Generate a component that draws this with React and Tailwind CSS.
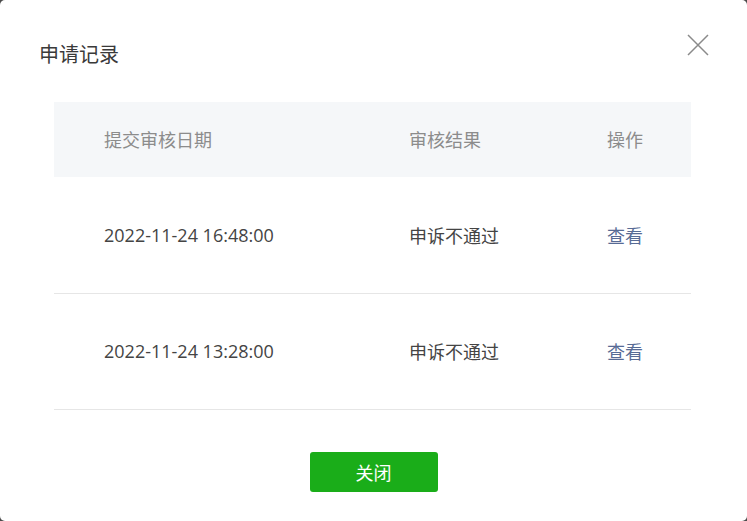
import React from "react";

const rows = [
  { date: "2022-11-24 16:48:00", result: "申诉不通过", h: "h-[117px]" },
  { date: "2022-11-24 13:28:00", result: "申诉不通过", h: "h-[116px]" },
];

export default function App() {
  return (
    <div className="h-[521px] w-[747px] bg-[#4b4b4b] font-['Noto_Sans_CJK_SC','Microsoft_YaHei',sans-serif]">
      <div className="relative flex h-full flex-col rounded-[5px] bg-white">
        {/* 标题 */}
        <h2 className="pl-[39px] pt-[40px] text-[20px] leading-[28px] text-[#3a3a3a]">申请记录</h2>
        <button className="absolute right-[38px] top-[34px] h-[22px] w-[22px] text-[#8a8a8a]">
          <svg viewBox="0 0 22 22" className="h-[22px] w-[22px]" fill="none" stroke="currentColor" strokeWidth="1.5">
            <path d="M1 1L21 21M21 1L1 21" />
          </svg>
        </button>

        {/* 表格 */}
        <div className="ml-[54px] mr-[56px] mt-[34px]">
          <div className="grid h-[75px] grid-cols-[355px_198px_1fr] items-center bg-[#f5f7f9] text-[18px] text-[#8c8c8c]">
            <div className="pl-[50px]">提交审核日期</div>
            <div>审核结果</div>
            <div>操作</div>
          </div>
          {rows.map((row, i) => (
            <div
              key={i}
              className={`grid ${row.h} grid-cols-[355px_198px_1fr] items-center border-b border-[#e6e6e6] text-[18px] text-[#444]`}
            >
              <div className="pl-[50px] font-['Open_Sans','Noto_Sans_CJK_SC',sans-serif]">{row.date}</div>
              <div>{row.result}</div>
              <div className="text-[#576b95]">查看</div>
            </div>
          ))}
        </div>

        <div className="mt-[42px] flex justify-center">
          <button className="h-[40px] w-[128px] rounded-[3px] bg-[#1aad19] text-[18px] text-white">关闭</button>
        </div>
      </div>
    </div>
  );
}
